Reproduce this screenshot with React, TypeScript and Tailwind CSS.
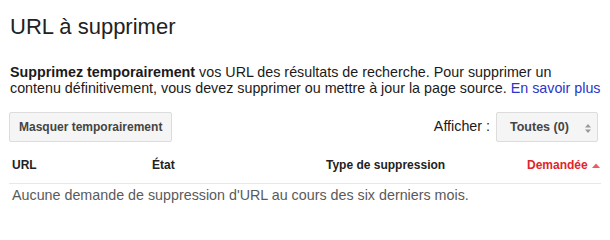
import React from "react";

export default function App() {
  return (
    <div
      className="w-[610px] h-[220px] bg-white px-[9px] text-[#222]"
      style={{ fontFamily: '"Liberation Sans", Arial, sans-serif' }}
    >
      <h1 className="ml-px pt-[14px] text-[22px] leading-[26px] font-normal text-[#222]">
        URL à supprimer
      </h1>
      <p className="ml-px mt-[24px] text-[14.3px] leading-[16px] whitespace-nowrap text-[#1a1a1a]">
        <b className="font-bold">Supprimez temporairement</b> vos URL des résultats de recherche. Pour supprimer un
        <br />
        contenu définitivement, vous devez supprimer ou mettre à jour la page source.{" "}
        <a className="text-[#2a35c9]">En savoir plus</a>
      </p>
      <div className="mt-[16px] flex items-center justify-between pr-[3px]">
        <button className="h-[30px] px-[9px] rounded-[2px] border border-[#dcdcdc] bg-[#f5f5f5] text-[12px] font-bold text-[#444]">
          Masquer temporairement
        </button>
        <div className="flex items-center gap-[6px]">
          <span className="text-[14.3px] text-[#1a1a1a]">Afficher :</span>
          <div className="flex h-[30px] w-[102px] items-center justify-between rounded-[2px] border border-[#dcdcdc] bg-[#f5f5f5] pl-[13px] pr-[6px]">
            <span className="text-[12.5px] font-bold text-[#444]">Toutes (0)</span>
            <svg width="6" height="9" viewBox="0 0 6 9" className="mt-[3px]">
              <path d="M0 3.5 L3 0 L6 3.5 Z" fill="#999" />
              <path d="M0 5.5 L3 9 L6 5.5 Z" fill="#999" />
            </svg>
          </div>
        </div>
      </div>
      <div className="mt-[5px]">
        <div className="grid grid-cols-[140px_174px_201px_1fr] border-b border-[#e8e8e8] px-[3px] py-[10px] text-[12px] leading-[16px] font-bold text-[#222]">
          <span>URL</span>
          <span>État</span>
          <span>Type de suppression</span>
          <span className="flex items-center justify-end gap-[4px] text-[#e0252b]">
            Demandée
            <svg width="8" height="5" viewBox="0 0 8 5">
              <path d="M0 5 L4 0.5 L8 5 Z" fill="#ee5a5e" />
            </svg>
          </span>
        </div>
        <div className="px-[3px] pt-[3px] text-[14.3px] leading-[16px] text-[#5a5a5a]">
          Aucune demande de suppression d'URL au cours des six derniers mois.
        </div>
      </div>
    </div>
  );
}
